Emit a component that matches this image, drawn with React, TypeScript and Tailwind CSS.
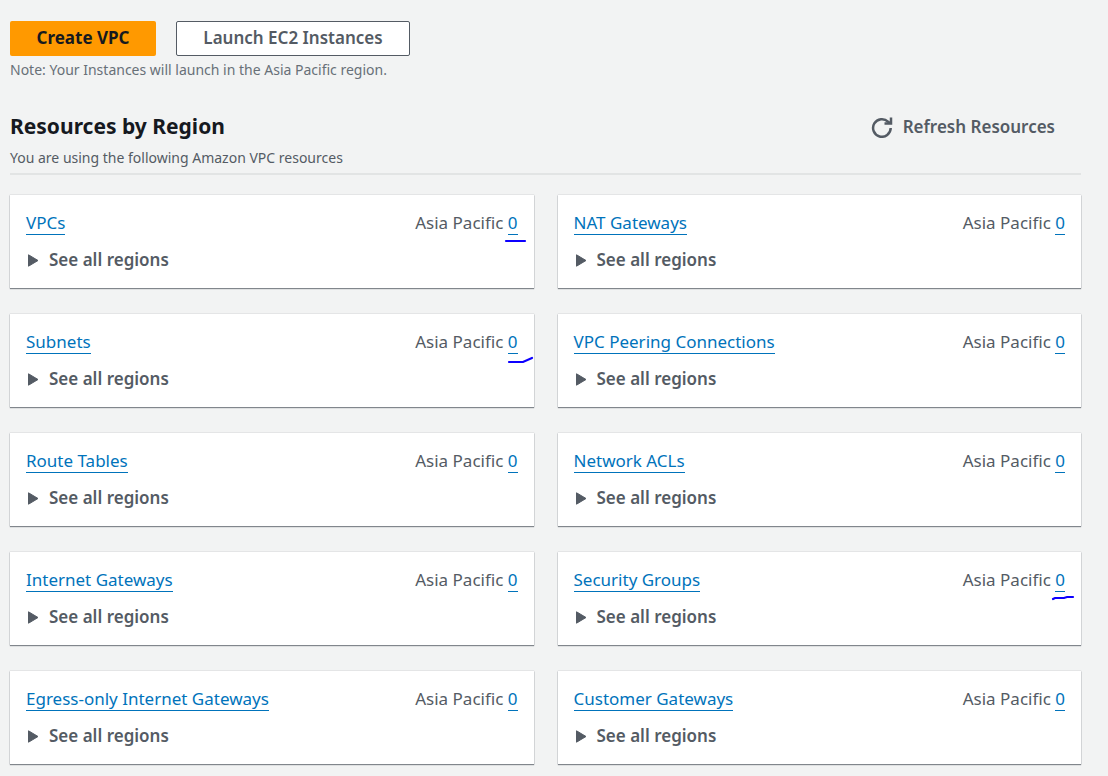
type Resource = { name: string; count: number; mark?: { path: string; place: string } };

const resources: Resource[] = [
  { name: "VPCs", count: 0, mark: { path: "M2 6H21", place: "right-[6px] top-[40px]" } },
  { name: "NAT Gateways", count: 0 },
  { name: "Subnets", count: 0, mark: { path: "M2 8H16L25 4", place: "right-[3px] top-[40px]" } },
  { name: "VPC Peering Connections", count: 0 },
  { name: "Route Tables", count: 0 },
  { name: "Network ACLs", count: 0 },
  { name: "Internet Gateways", count: 0 },
  { name: "Security Groups", count: 0, mark: { path: "M2 7L4 6H13L16 5H22", place: "right-[6px] top-[40px]" } },
  { name: "Egress-only Internet Gateways", count: 0 },
  { name: "Customer Gateways", count: 0 },
];

function RefreshIcon() {
  return (
    <svg className="size-[22px] shrink-0" viewBox="0 0 22 22" fill="none" stroke="#545b64" strokeWidth="2.5" aria-hidden="true">
      <path d="M19.7 12A8.8 8.8 0 1 1 17.2 5.8L19 7" />
      <path d="M20 1.5V7.5H13.5" />
    </svg>
  );
}

function ResourceCard({ resource }: { resource: Resource }) {
  const { name, count, mark } = resource;
  return (
    <li className="relative bg-white p-4 shadow-[0_1px_1px_0_#545b64b0,0_0_1px_0_#545b6480]">
      <div className="flex h-6 items-start justify-between leading-6">
        <a href="#" className="border-b border-[#0073bb] leading-[23px] text-[#0073bb]">{name}</a>
        <p>
          Asia Pacific{" "}
          <a href="#" className="inline-block border-b border-[#0073bb] leading-[22px] text-[#0073bb]">{count}</a>
        </p>
      </div>
      <button type="button" className="mt-[13px] flex items-center gap-[10px] pl-[2px] leading-6 font-semibold">
        <svg className="h-[13px] w-[11px]" viewBox="0 0 11 13" fill="#545b64" stroke="#545b64" strokeLinejoin="round" aria-hidden="true">
          <path d="M0.5 0.8L10 6.5L0.5 12.2Z" />
        </svg>
        See all regions
      </button>
      {mark && (
        <svg className={`absolute h-3 w-6 overflow-visible ${mark.place}`} viewBox="0 0 24 12" fill="none" stroke="#0d00ff" strokeWidth="2.2" strokeLinecap="round" aria-hidden="true">
          <path d={mark.path} />
        </svg>
      )}
    </li>
  );
}

export default function App() {
  return (
    <main className="min-h-screen bg-[#f2f3f3] pt-[21px] pr-[27px] pb-[11px] pl-[10px] font-['Noto_Sans',sans-serif] text-[17px] text-[#545b64]">
      <div className="flex gap-5">
        <button type="button" className="flex h-[35px] w-[146px] items-center justify-center rounded-[2px] bg-[#ff9900] pb-px font-bold text-[#16191f]">
          Create VPC
        </button>
        <button type="button" className="flex h-[35px] w-[234px] items-center justify-center rounded-[2px] border border-[#545b64] bg-white pb-px font-semibold">
          Launch EC2 Instances
        </button>
      </div>
      <p className="mt-1 text-[14px] leading-5 text-[#687078]">Note: Your Instances will launch in the Asia Pacific region.</p>

      <header className="mt-8 flex items-start justify-between border-b-2 border-[#e2e4e4] pr-[26px] pb-[5px]">
        <div>
          <h1 className="text-[21px] leading-7 font-bold text-[#16191f]">Resources by Region</h1>
          <p className="mt-2 text-[14px] leading-5">You are using the following Amazon VPC resources</p>
        </div>
        <button type="button" className="mt-[3px] flex items-center gap-[10px] leading-6 font-semibold">
          <RefreshIcon />
          Refresh Resources
        </button>
      </header>

      <ul className="mt-5 grid grid-cols-2 gap-x-6 gap-y-[26px]">
        {resources.map((resource) => (
          <ResourceCard key={resource.name} resource={resource} />
        ))}
      </ul>
    </main>
  );
}
